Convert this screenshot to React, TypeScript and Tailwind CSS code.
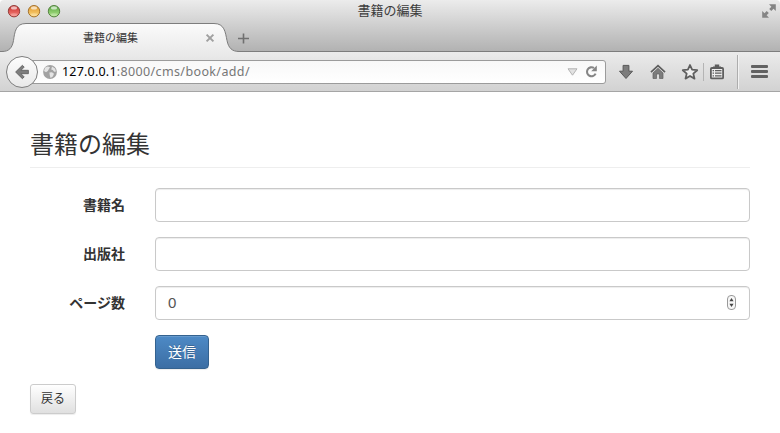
import React from 'react';

const JP = "font-['Liberation_Sans','Noto_Sans_CJK_JP',sans-serif]";

function Light({ id, light, dark, rim }: { id: string; light: string; dark: string; rim: string }) {
  return (
    <svg width="14" height="14" viewBox="0 0 14 14">
      <defs>
        <linearGradient id={id} x1="0" y1="0" x2="0" y2="1">
          <stop offset="0.1" stopColor={dark} />
          <stop offset="1" stopColor={light} />
        </linearGradient>
      </defs>
      <circle cx="7" cy="7.2" r="5.7" fill={`url(#${id})`} stroke={rim} strokeWidth="1" />
      <ellipse cx="7" cy="3.9" rx="3" ry="1.6" fill="#fff" opacity="0.65" />
      <ellipse cx="7" cy="10.7" rx="3.2" ry="1.4" fill="#fff" opacity="0.25" />
    </svg>
  );
}

function TitleBar() {
  return (
    <div className="flex h-[23px] items-start justify-between">
      <div className="flex w-[100px] gap-[6px] pt-[4px] pl-[7px]">
        <Light id="red" light="#f88880" dark="#cc3331" rim="#94403d" />
        <Light id="amber" light="#fdda80" dark="#e39a30" rim="#a5742f" />
        <Light id="green" light="#b2e68c" dark="#5fac47" rim="#568442" />
      </div>
      <div className="h-[23px] text-[13px] leading-[22px] text-[#3c3c3c]">書籍の編集</div>
      <div className="flex w-[100px] justify-end pt-[4px] pr-[4px]">
        <svg width="14" height="14" viewBox="0 0 14 14" fill="#858585">
          <path d="M7 0.3H13.8V7L11.5 4.8L9.3 7L7.2 4.9L9.4 2.7ZM7 13.7H0.2V7L2.5 9.2L4.7 7L6.8 9.1L4.6 11.3Z" />
        </svg>
      </div>
    </div>
  );
}

function TabStrip() {
  return (
    <div className="flex h-[29px]">
      <div className="relative flex h-[29px] w-[230px] items-center">
        <svg className="absolute top-0 left-0" width="242" height="29" viewBox="0 0 242 29">
          <defs>
            <linearGradient id="tab" x1="0" y1="0" x2="0" y2="1">
              <stop offset="0" stopColor="#fbfbfb" />
              <stop offset="1" stopColor="#ebebeb" />
            </linearGradient>
          </defs>
          <path
            d="M0 28.5H2C9 28.5 12.2 25 13.5 17.5C14.8 9 15.5 0.5 26 0.5H214C224.5 0.5 225.3 9 227 17.5C228.5 25 232 28.5 239 28.5V29H0Z"
            fill="url(#tab)"
          />
          <path
            d="M0 28.5H2C9 28.5 12.2 25 13.5 17.5C14.8 9 15.5 0.5 26 0.5H214C224.5 0.5 225.3 9 227 17.5C228.5 25 232 28.5 239 28.5H242"
            fill="none"
            stroke="#7d7d7d"
          />
        </svg>
        <div className="relative w-[205px] pt-px pl-[83px] text-[11px] leading-[29px] text-[#333]">書籍の編集</div>
        <svg className="relative" width="10" height="10" viewBox="0 0 10 10">
          <path d="M1.6 1.6L8.4 8.4M8.4 1.6L1.6 8.4" stroke="#a0a0a0" strokeWidth="2" />
        </svg>
      </div>
      <svg className="mt-[10px] ml-[8px]" width="11" height="11" viewBox="0 0 11 11">
        <path d="M5.5 0.5V10.5M0 5.5H11" stroke="#707070" strokeWidth="1.6" />
      </svg>
    </div>
  );
}

function Toolbar() {
  return (
    <div className="flex h-[40px] items-center border-b border-[#a5a5a5] bg-linear-to-b from-[#ebebeb] to-[#d2d2d2]">
      <div className="relative z-10 ml-[6px] flex h-[32px] w-[32px] shrink-0 items-center justify-center rounded-full border border-[#7e7e7e] bg-linear-to-b from-[#fdfdfd] to-[#e9e9e9]">
        <svg width="16" height="16" viewBox="0 0 16 16">
          <path
            d="M8.4 1.3L1.6 8L8.4 14.7L10.2 12.9L7 9.7H14.4V6.3H7L10.2 3.1Z"
            fill="#7d7d7d"
            stroke="#5a5a5a"
            strokeWidth="0.8"
          />
        </svg>
      </div>
      <div className="-ml-[8px] flex h-[24px] w-[576px] shrink-0 items-center rounded-r-[3px] border border-[#9b9b9b] bg-linear-to-b from-[#f8f8f8] to-white pl-[12px]">
        <svg width="14" height="14" viewBox="0 0 14 14">
          <circle cx="7" cy="7" r="6.9" fill="#a2a2a2" />
          <path
            d="M2.2 2.5L4.8 1.6L7 2.2L5.8 4.2L4.8 6.1L3 7.2L1 6ZM9 1.6L12 3.5L13 6.5L11.2 6.7L9.8 5L8.2 4.6ZM6.4 7.6L9 7.2L11 8.8L9.8 11.4L7.6 13L6.8 10.5Z"
            fill="#e4e4e4"
          />
        </svg>
        <div className="ml-[5px] flex-1 pt-px font-['Noto_Sans',sans-serif] text-[12.5px] leading-[22px] tracking-[0.37px] text-[#777]">
          <span className="tracking-[0.2px] text-black">127.0.0.1</span>:8000/cms/book/add/
        </div>
        <svg width="11" height="8" viewBox="0 0 11 8">
          <path d="M1 0.8H10L5.5 7.2Z" fill="#e2e2e2" stroke="#b3b3b3" />
        </svg>
        <svg className="mr-[7px] ml-[7px]" width="13" height="13" viewBox="0 0 13 13">
          <path d="M10.6 8.6A4.5 4.5 0 1 1 9 3" fill="none" stroke="#858585" strokeWidth="2.1" />
          <path d="M11.8 0.5V6.2H6.2Z" fill="#858585" />
        </svg>
      </div>
      <svg className="ml-[12px] shrink-0" width="16" height="16" viewBox="0 0 16 16">
        <path d="M5.1 1.4H10.9V7.2H14.5L8 14.5L1.5 7.2H5.1Z" fill="#7c7c7c" stroke="#585858" strokeLinejoin="round" />
      </svg>
      <svg className="ml-[16px] shrink-0" width="16" height="16" viewBox="0 0 16 16">
        <path d="M3 9L8 4.3L13 9V14.5H9.5V10H6.5V14.5H3Z" fill="#7c7c7c" stroke="#606060" strokeWidth="0.7" />
        <path d="M1 8.2L8 1.7L15 8.2" fill="none" stroke="#5e5e5e" strokeWidth="1.8" />
      </svg>
      <svg className="ml-[15px] shrink-0" width="18" height="18" viewBox="0 0 18 18">
        <path
          d="M9 2L11.1 6.7L16.2 7.2L12.3 10.6L13.5 15.6L9 13L4.5 15.6L5.7 10.6L1.8 7.2L6.9 6.7Z"
          fill="#eeeeee"
          stroke="#5e5e5e"
          strokeWidth="1.8"
          strokeLinejoin="round"
        />
      </svg>
      <div className="ml-[4px] h-[18px] w-px shrink-0 bg-[#b4b4b4]" />
      <svg className="ml-[5px] shrink-0" width="16" height="16" viewBox="0 0 16 16">
        <rect x="1.9" y="4" width="12.2" height="10.4" rx="1" fill="#eee" stroke="#5e5e5e" strokeWidth="1.8" />
        <path d="M4 4.2V2.6H5.8V0.5H10.2V2.6H12V4.2Z" fill="#5e5e5e" />
        <path d="M3.6 6.6H5M6 6.6H12.5M3.6 9.2H5M6 9.2H12.5M3.6 11.8H5M6 11.8H12.5" stroke="#5e5e5e" strokeWidth="1.2" />
      </svg>
      <div className="ml-[12px] h-[34px] w-[2px] shrink-0 border-r border-l border-r-[#f2f2f2] border-l-[#adadad]" />
      <div className="ml-[12px] flex w-[17px] shrink-0 flex-col gap-[2px]">
        <div className="h-[3px] rounded-[1px] bg-[#626262]" />
        <div className="h-[3px] rounded-[1px] bg-[#626262]" />
        <div className="h-[3px] rounded-[1px] bg-[#626262]" />
      </div>
    </div>
  );
}

function Field({ label, children }: { label: string; children?: React.ReactNode }) {
  return (
    <div className="mb-[15px] flex h-[34px]">
      <div className="w-[95px] text-right text-[14px] leading-[34px] font-bold text-[#333]">{label}</div>
      <div className="ml-[30px] flex flex-1 items-center justify-between rounded-[4px] border border-[#c9c9c9] bg-white px-[12px] shadow-[inset_0_1px_1px_rgba(0,0,0,0.075)]">
        {children}
      </div>
    </div>
  );
}

export default function App() {
  return (
    <div className={`h-[433px] w-[780px] overflow-hidden rounded-b-[3px] bg-white ${JP}`}>
      <div className="h-[52px] rounded-t-[4px] border-b border-[#7d7d7d] bg-linear-to-b from-[#ececec] to-[#b2b2b2]">
        <TitleBar />
        <TabStrip />
      </div>
      <Toolbar />
      <main className="px-[30px] pt-[36px]">
        <h3 className="mb-[20px] h-[40px] border-b border-[#eee] text-[24px] leading-[33px] text-[#333]">書籍の編集</h3>
        <Field label="書籍名" />
        <Field label="出版社" />
        <Field label="ページ数">
          <span className="pt-px text-[15px] text-[#555]">0</span>
          <svg width="11" height="16" viewBox="0 0 11 16">
            <rect x="1.5" y="0.5" width="8" height="14" rx="3.5" fill="#f7f7f7" stroke="#999" />
            <path d="M5.5 3L7.6 6.2H3.4ZM5.5 12L7.6 8.8H3.4Z" fill="#444" />
          </svg>
        </Field>
        <button className="ml-[125px] block h-[34px] w-[54px] rounded-[4px] border border-[#34628f] bg-linear-to-b from-[#4d8ac6] to-[#3c6ea4] text-[14px] leading-[33px] text-white shadow-[inset_0_1px_0_rgba(255,255,255,0.15),0_1px_1px_rgba(0,0,0,0.075)] [text-shadow:0_-1px_0_rgba(0,0,0,0.2)]">
          送信
        </button>
        <button className="mt-[15px] block h-[30px] w-[46px] rounded-[3px] border border-[#ccc] bg-linear-to-b from-white to-[#e0e0e0] text-[12px] leading-[29px] text-[#333] shadow-[0_1px_1px_rgba(0,0,0,0.075)]">
          戻る
        </button>
      </main>
    </div>
  );
}
